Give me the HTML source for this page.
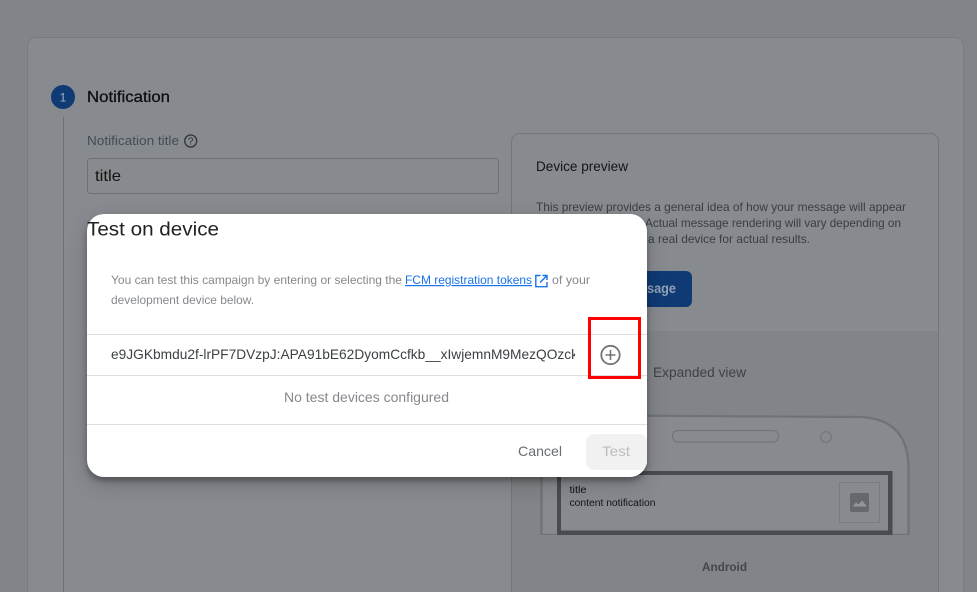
<!DOCTYPE html>
<html><head><meta charset="utf-8"><style>
html,body{margin:0;padding:0;background:#818488;width:977px;height:592px;overflow:hidden}
svg{position:absolute;left:0;top:0;display:block}
text{font-family:"Liberation Sans",sans-serif}
#dlg{position:absolute;left:87px;top:214px;width:560px;height:263px;background:#fff;border-radius:17px;box-shadow:0 4px 6px rgba(0,0,0,.3),0 8px 22px rgba(0,0,0,.16)}
</style></head><body>
<svg width="977" height="592" viewBox="0 0 977 592" xmlns="http://www.w3.org/2000/svg">
<rect x="27.5" y="37.5" width="936" height="600" rx="8" fill="#878a8e" stroke="#787b7f"/>
<circle cx="63" cy="97" r="12" fill="#103a74"/>
<text x="63" y="101.500" font-size="12" fill="#a0b0c5" text-anchor="middle">1</text>
<rect x="63" y="117" width="1" height="480" fill="#6e7175"/>
<text x="87" y="102" font-size="16" fill="#0a0e13" stroke="#0a0e13" stroke-width=".25" textLength="83" lengthAdjust="spacingAndGlyphs">Notification</text>
<text x="87" y="145" font-size="13" fill="#424c56" textLength="92" lengthAdjust="spacingAndGlyphs">Notification title</text>
<circle cx="190.700" cy="141" r="6" fill="none" stroke="#303338" stroke-width="1.300"/>
<text x="190.700" y="144.500" font-size="10" fill="#303338" text-anchor="middle">?</text>
<rect x="87.500" y="158.500" width="411" height="35" rx="3" fill="#878a8e" stroke="#6e7175"/>
<text x="95" y="181" font-size="16" fill="#161311" textLength="26" lengthAdjust="spacingAndGlyphs">title</text>

<rect x="511.500" y="133.500" width="427" height="500" rx="8" fill="#878a8e" stroke="#73767a"/>
<path d="M512 331H938V592H512Z" fill="#818488"/>
<path d="M511.500 592V331M938.500 592V331" stroke="#73767a" fill="none"/>
<text x="536" y="171" font-size="14" fill="#11151a" textLength="92" lengthAdjust="spacingAndGlyphs">Device preview</text>
<text x="536" y="211" font-size="12" fill="#3a3d41" textLength="370" lengthAdjust="spacingAndGlyphs">This preview provides a general idea of how your message will appear</text>
<text x="645" y="227" font-size="12" fill="#3a3d41" textLength="256" lengthAdjust="spacingAndGlyphs">Actual message rendering will vary depending on</text>
<text x="648" y="243" font-size="12" fill="#3a3d41" textLength="162" lengthAdjust="spacingAndGlyphs">a real device for actual results.</text>
<rect x="600" y="271" width="92" height="36" rx="6" fill="#103a74"/>
<text x="647" y="293" font-size="14" font-weight="700" fill="#90a1b7" textLength="29" lengthAdjust="spacingAndGlyphs">sage</text>
<text x="653" y="377" font-size="14" fill="#3e4145" textLength="93" lengthAdjust="spacingAndGlyphs">Expanded view</text>

<path d="M541.500 535V470Q541.500 417 600 415.500L860 417Q908.500 419 908.500 468V535Z" fill="#878a8e" stroke="#6f7276" stroke-width="2.200"/>
<rect x="535" y="535" width="380" height="6" fill="#818488"/>
<rect x="672.500" y="430.500" width="106" height="11.500" rx="5.500" fill="none" stroke="#72757a" stroke-width="1.200"/>
<circle cx="826" cy="437" r="5.300" fill="none" stroke="#72757a" stroke-width="1.200"/>
<rect x="557" y="471" width="335.500" height="64" fill="#484b50"/>
<rect x="561" y="475" width="327" height="55.500" fill="#878a8e"/>
<rect x="839.500" y="482.500" width="40" height="40" fill="none" stroke="#797c80" stroke-width="1"/>
<rect x="850" y="493" width="19" height="19" rx="2" fill="#65686c"/>
<path d="M852.500 506.500L856 502.500L858.500 504.500L862 500.500L867 506.500Z" fill="#93969a"/>
<text x="569.500" y="493" font-size="10" fill="#0a0d12" textLength="17" lengthAdjust="spacingAndGlyphs">title</text>
<text x="569.500" y="506" font-size="10" fill="#111419" textLength="86" lengthAdjust="spacingAndGlyphs">content notification</text>
<text x="702" y="571" font-size="12" font-weight="700" fill="#43464b" textLength="45" lengthAdjust="spacingAndGlyphs">Android</text>
</svg>

<div id="dlg"></div>

<svg width="977" height="592" viewBox="0 0 977 592" xmlns="http://www.w3.org/2000/svg">
<defs><clipPath id="c"><rect x="100" y="340" width="475" height="30"/></clipPath></defs>
<text x="87" y="235.500" font-size="19.500" fill="#202124" textLength="132" lengthAdjust="spacingAndGlyphs">Test on device</text>
<text x="111" y="284" font-size="12" fill="#85888c" textLength="291" lengthAdjust="spacingAndGlyphs">You can test this campaign by entering or selecting the</text>
<text x="405" y="284" font-size="12" fill="#1a73e8" text-decoration="underline" textLength="127" lengthAdjust="spacingAndGlyphs">FCM registration tokens</text>
<path d="M540.500 275.500H535.800V286.700H547V282M540 282.500L546.800 275.700M542.500 275.500H547V280" fill="none" stroke="#1a73e8" stroke-width="1.400"/>
<text x="552" y="284" font-size="12" fill="#85888c" textLength="38" lengthAdjust="spacingAndGlyphs">of your</text>
<text x="111" y="304" font-size="12" fill="#85888c" textLength="143" lengthAdjust="spacingAndGlyphs">development device below.</text>
<rect x="87" y="334" width="560" height="1" fill="#e0e0e0"/>
<rect x="87" y="375" width="560" height="1" fill="#e0e0e0"/>
<rect x="87" y="424" width="560" height="1" fill="#e0e0e0"/>
<g clip-path="url(#c)"><text x="111" y="359" font-size="14" fill="#3c4043" textLength="467" lengthAdjust="spacingAndGlyphs">e9JGKbmdu2f-lrPF7DVzpJ:APA91bE62DyomCcfkb__xIwjemnM9MezQOzck</text></g>
<circle cx="610.500" cy="355" r="9.200" fill="none" stroke="#757575" stroke-width="1.800"/>
<path d="M610.500 350V360M605.500 355H615.500" stroke="#757575" stroke-width="1.600" fill="none"/>
<rect x="589.500" y="318.500" width="50" height="59" fill="none" stroke="#fe0000" stroke-width="3"/>
<text x="284" y="402" font-size="14" fill="#85888c" textLength="165" lengthAdjust="spacingAndGlyphs">No test devices configured</text>
<text x="518" y="456" font-size="14" fill="#6a6d71" textLength="44" lengthAdjust="spacingAndGlyphs">Cancel</text>
<rect x="586" y="434" width="61" height="36" rx="8" fill="#f1f1f1"/>
<text x="602" y="456" font-size="14" fill="#bdbdbd" textLength="28" lengthAdjust="spacingAndGlyphs">Test</text>
</svg>
</body></html>
